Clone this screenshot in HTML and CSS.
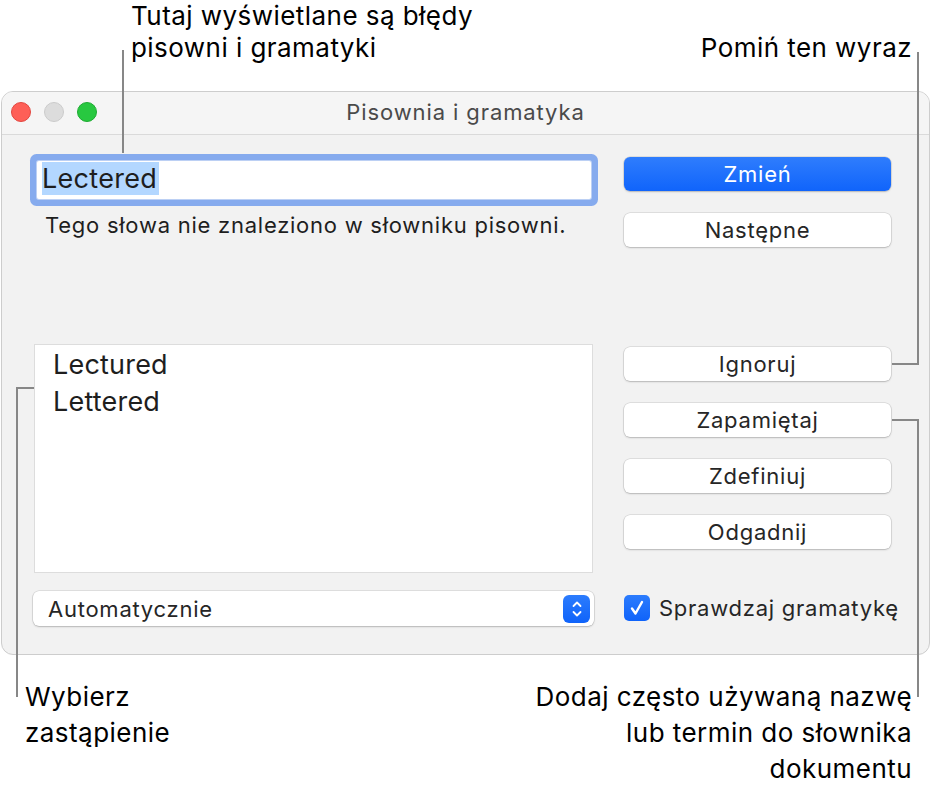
FILE: index.html
```html
<html>
<head>
<meta charset="utf-8">
<link rel="stylesheet" href="styles.css">
</head>
<body>
	<div class="page">
		<div class="top-notes">
			<div class="note">Tutaj wyświetlane są błędy<br>pisowni i gramatyki</div>
			<div class="note note-skip">Pomiń ten wyraz</div>
		</div>

		<div class="window">
			<div class="titlebar">
				<div class="lights">
					<span class="light red"></span>
					<span class="light gray"></span>
					<span class="light green"></span>
				</div>
				<div class="title">Pisownia i gramatyka</div>
			</div>

			<div class="panel">
				<div class="col-left">
					<div class="field"><span class="selected">Lectered</span></div>
					<p class="msg">Tego słowa nie znaleziono w słowniku pisowni.</p>
					<div class="list">
						<div class="item">Lectured</div>
						<div class="item">Lettered</div>
					</div>
					<div class="popup">
						<span>Automatycznie</span>
						<span class="stepper">
							<svg width="12" height="18" viewBox="0 0 12 18">
								<path d="M2.5 6 L6 2.5 L9.5 6" fill="none" stroke="#fff" stroke-width="1.8" stroke-linecap="round" stroke-linejoin="round"/>
								<path d="M2.5 12 L6 15.5 L9.5 12" fill="none" stroke="#fff" stroke-width="1.8" stroke-linecap="round" stroke-linejoin="round"/>
							</svg>
						</span>
					</div>
				</div>

				<div class="col-right">
					<div class="btn primary">Zmień</div>
					<div class="btn">Następne</div>
					<div class="btn gap-big">Ignoruj</div>
					<div class="btn">Zapamiętaj</div>
					<div class="btn">Zdefiniuj</div>
					<div class="btn">Odgadnij</div>
					<div class="check-row">
						<span class="checkbox">
							<svg width="16" height="18" viewBox="0 0 16 18">
								<path d="M3 9.5 L6.5 14.5 L13 3" fill="none" stroke="#fff" stroke-width="2.4" stroke-linecap="round" stroke-linejoin="round"/>
							</svg>
						</span>
						<span>Sprawdzaj gramatykę</span>
					</div>
				</div>
			</div>
		</div>

		<div class="bottom-notes">
			<div class="note">Wybierz<br>zastąpienie</div>
			<div class="note note-add">Dodaj często używaną nazwę<br>lub termin do słownika<br>dokumentu</div>
		</div>

		<!-- callout lines -->
		<svg class="leaders" width="931" height="795">
			<path d="M123 50 V153" />
			<path d="M918 52 V364 H892" />
			<path d="M892 420 H918 V697" />
			<path d="M34 388 H17 V697" />
		</svg>
	</div>
</body>
</html>
```

FILE: styles.css
```css
body {
	margin: 0;
	background: #ffffff;
	font-family: Inter, "Noto Sans", sans-serif;
	color: #000000;
}

.page {
	position: relative;
	width: 931px;
	height: 795px;
}

.note {
	font-size: 26px;
	line-height: 32px;
	letter-spacing: 0.45px;
}

.top-notes {
	height: 91px;
	display: flex;
	justify-content: space-between;
	padding: 0 19px 0 131px;
	box-sizing: border-box;
}

.note-skip {
	margin-top: 32px;
}

/* window */
.window {
	margin-left: 1px;
	width: 929px;
	height: 564px;
	box-sizing: border-box;
	border: 1px solid #cdcdcd;
	border-radius: 12px;
	background: #f2f2f2;
	overflow: hidden;
}

.titlebar {
	position: relative;
	height: 42px;
	border-bottom: 1px solid #dadada;
	background: #f5f5f5;
	display: flex;
	align-items: center;
	justify-content: center;
}

.lights {
	position: absolute;
	left: 9px;
	top: 10px;
	display: flex;
	gap: 13px;
}

.light {
	width: 20px;
	height: 20px;
	border-radius: 50%;
	box-sizing: border-box;
}

.light.red {
	background: #fe5f57;
	border: 1px solid #e2463f;
}

.light.gray {
	background: #dcdcdc;
	border: 1px solid #cbcbcb;
}

.light.green {
	background: #28c840;
	border: 1px solid #1eaa32;
}

.title {
	font-size: 22px;
	color: #4a4a4a;
	letter-spacing: 0.9px;
	margin-bottom: 2px;
}

.panel {
	display: flex;
	padding-left: 32px;
	gap: 31px;
}

.col-left {
	width: 559px;
	display: flex;
	flex-direction: column;
}

.field {
	margin: 26px 2px 0 3px;
	height: 38px;
	box-sizing: border-box;
	background: #ffffff;
	border-radius: 2px;
	box-shadow: 0 0 0 1px #bcd0f4, 0 0 0 7px #86abee;
	display: flex;
	align-items: flex-start;
	padding: 1px 0 0 5px;
	font-size: 27px;
	color: #1e1e1e;
	letter-spacing: 0.3px;
}

.selected {
	background: #b3d7ff;
	line-height: 33px;
	padding-right: 2px;
}

.msg {
	margin: 12px 0 0 11px;
	font-size: 22px;
	line-height: 28px;
	color: #1e1e1e;
	letter-spacing: 0.75px;
}

.list {
	margin-top: 105px;
	height: 229px;
	box-sizing: border-box;
	border: 1px solid #dddddd;
	background: #ffffff;
	padding: 1px 0 0 18px;
}

.item {
	font-size: 27px;
	line-height: 37px;
	color: #1e1e1e;
	letter-spacing: 0.2px;
}

.popup {
	margin: 18px -1px 0 -1px;
	height: 35px;
	background: #ffffff;
	border-radius: 6px;
	box-shadow: 0 0 0 0.5px rgba(0, 0, 0, 0.16), 0 1px 2px rgba(0, 0, 0, 0.18);
	display: flex;
	align-items: center;
	justify-content: space-between;
	padding: 0 4px 0 15px;
	font-size: 22px;
	color: #262626;
	letter-spacing: 0.75px;
}

.stepper {
	width: 27px;
	height: 28px;
	border-radius: 6px;
	background: linear-gradient(#2c7cfd, #0f63fa);
	display: flex;
	align-items: center;
	justify-content: center;
}

.col-right {
	width: 267px;
	display: flex;
	flex-direction: column;
}

.btn {
	margin-top: 22px;
	height: 34px;
	border-radius: 6px;
	background: #ffffff;
	box-shadow: 0 0 0 0.5px rgba(0, 0, 0, 0.16), 0 1px 2px rgba(0, 0, 0, 0.18);
	display: flex;
	align-items: center;
	justify-content: center;
	font-size: 22px;
	color: #262626;
	letter-spacing: 0.75px;
}

.btn.primary {
	background: linear-gradient(#2f7dfd, #1064fb);
	color: #ffffff;
}

.btn.gap-big {
	margin-top: 100px;
}

.check-row {
	margin-top: 46px;
	display: flex;
	align-items: center;
	gap: 9px;
	white-space: nowrap;
	font-size: 22px;
	color: #262626;
	letter-spacing: 0.75px;
}

.checkbox {
	flex-shrink: 0;
	width: 26px;
	height: 26px;
	border-radius: 5px;
	background: linear-gradient(#2c7cfd, #0f63fa);
	display: flex;
	align-items: center;
	justify-content: center;
}

.bottom-notes {
	display: flex;
	justify-content: space-between;
	padding: 24px 19px 0 25px;
}

.bottom-notes .note {
	line-height: 36px;
}

.note-add {
	text-align: right;
}

.leaders {
	position: absolute;
	left: 0;
	top: 0;
	pointer-events: none;
}

.leaders path {
	fill: none;
	stroke: #878787;
	stroke-width: 2;
}
```
